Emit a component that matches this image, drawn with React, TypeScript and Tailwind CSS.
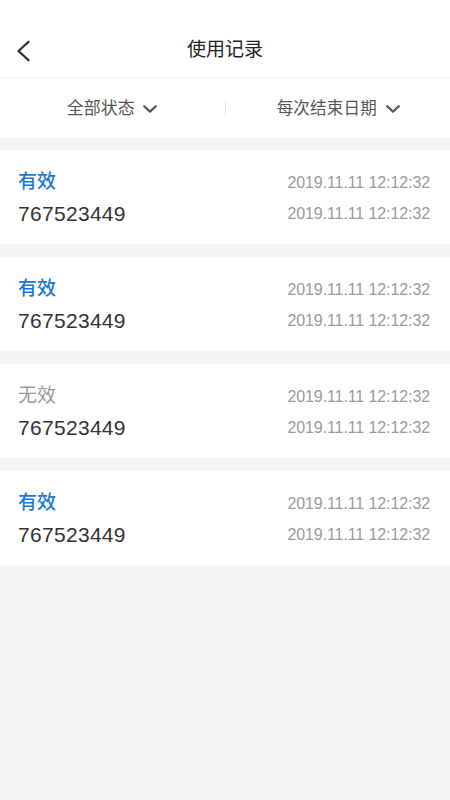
import React from "react";

const records = [
  { valid: true },
  { valid: true },
  { valid: false },
  { valid: true },
];

function Chevron() {
  return (
    <svg width="14" height="8" viewBox="0 0 14 8" fill="none" className="shrink-0">
      <path d="M1.2 1.2 L7 6.6 L12.8 1.2" stroke="#555" strokeWidth="2.2" strokeLinecap="round" strokeLinejoin="round" />
    </svg>
  );
}

export default function App() {
  const font = { fontFamily: '"Liberation Sans", "Noto Sans CJK SC", sans-serif' };
  return (
    <div className="min-h-[800px] w-[450px] bg-[#f5f5f5]" style={font}>
      <div className="relative flex h-[78px] items-end justify-center border-b border-[#eeeeee] bg-white pb-[15px]">
        <svg width="14" height="22" viewBox="0 0 14 22" fill="none" className="absolute left-[16px] top-[40px]">
          <path d="M12.5 1.8 L2.5 11 L12.5 20.2" stroke="#333" strokeWidth="2.3" strokeLinecap="round" strokeLinejoin="round" />
        </svg>
        <span className="text-[19px] leading-[24px] text-[#222]">使用记录</span>
      </div>
      <div className="flex h-[60px] items-center bg-white pt-[1px]">
        <div className="flex flex-1 items-center justify-center gap-[8px] pr-[1px]">
          <span className="text-[17px] text-[#555]">全部状态</span>
          <Chevron />
        </div>
        <div className="h-[15px] w-px bg-[#e3e3e3]" />
        <div className="flex flex-1 items-center justify-center gap-[9px] pl-[1px]">
          <span className="text-[16.5px] tracking-[0.2px] text-[#555]">每次结束日期</span>
          <Chevron />
        </div>
      </div>
      <div className="flex flex-col gap-[13px] pt-[12px]">
        {records.map((r, i) => (
          <div key={i} className="flex h-[94px] flex-col justify-center bg-white pl-[18px] pr-[20px] pt-[2px]">
            <div className="flex h-[31px] items-center justify-between">
              <span className={`text-[19px] ${r.valid ? "font-medium text-[#1a78d2]" : "text-[#999999]"}`}>
                {r.valid ? "有效" : "无效"}
              </span>
              <span className="text-[16px] text-[#9a9a9a] tracking-[-0.1px]">2019.11.11 12:12:32</span>
            </div>
            <div className="flex h-[31px] items-center justify-between">
              <span className="text-[21px] tracking-[0.3px] text-[#333]">767523449</span>
              <span className="text-[16px] text-[#9a9a9a] tracking-[-0.1px]">2019.11.11 12:12:32</span>
            </div>
          </div>
        ))}
      </div>
    </div>
  );
}
